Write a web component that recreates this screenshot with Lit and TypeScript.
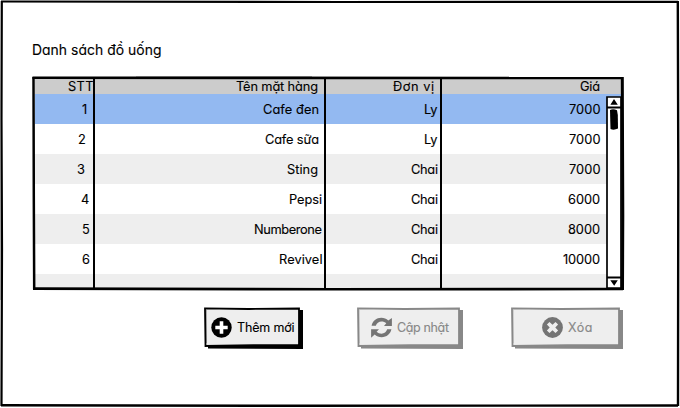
import { LitElement, html, css, svg } from "lit";
import { customElement, property } from "lit/decorators.js";

/** A single line of lettering fitted to a given width. */
@customElement("fit-text")
class FitText extends LitElement {
  @property({ type: Number }) width = 50;
  @property({ type: String }) text = "";
  static styles = css`
    :host { display: block; line-height: 0; flex: none; }
    svg { display: block; overflow: visible; }
    text { font-family: Inter, "Noto Sans", sans-serif; font-feature-settings: "cv11" 1; fill: currentColor; stroke: currentColor; stroke-width: 0.12px; }
  `;
  render() {
    return html`<svg width=${this.width} height="18">
      <text x="0" y="14" textLength=${this.width} lengthAdjust="spacing">${this.text}</text>
    </svg>`;
  }
}

type Cell = [text: string, width: number, inset: number];
const HEADER: Cell[] = [["STT", 25.5, 0], ["Tên mặt hàng", 82, 7.5], ["Đơn vị", 41, 6], ["Giá", 20, 21]];
const ROWS: Cell[][] = [
  [["1", 5.5, 6], ["Cafe đen", 56, 6.5], ["Ly", 13.5, 2.5], ["7000", 31.5, 21]],
  [["2", 7.5, 8], ["Cafe sữa", 54, 6.5], ["Ly", 13.5, 2.5], ["7000", 31.5, 21]],
  [["3", 8, 8], ["Sting", 31, 7.5], ["Chai", 27, 2], ["7000", 31.5, 21]],
  [["4", 8, 4], ["Pepsi", 33, 3], ["Chai", 27, 2], ["6000", 32, 21]],
  [["5", 7.5, 4], ["Numberone", 68, 3], ["Chai", 27, 2], ["8000", 32, 21]],
  [["6", 7.5, 4], ["Revivel", 43.5, 3], ["Chai", 27, 2], ["10000", 37, 21]],
];

const plusIcon = svg`<circle cx="10.5" cy="10.5" r="10.2" fill="currentColor"/>
  <path d="M8.7 4.3h3.6v4.4h4.4v3.6h-4.4v4.4H8.7v-4.4H4.3V8.7h4.4z" fill="#fff"/>`;
const crossIcon = svg`<circle cx="10.5" cy="10.5" r="10.4" fill="currentColor"/>
  <path d="M7.5 4.9l3 2.8 3-2.8 2.6 2.6-2.8 3 2.8 3-2.6 2.6-3-2.8-3 2.8-2.6-2.6 2.8-3-2.8-3z" fill="#eee"/>`;
const refreshIcon = svg`<path fill="currentColor" d="M.6 8.700C1.500 4 5.500.8 10.300.8c2.700 0 5.100 1 7 2.800L20.900.9v8H13l2.300-2.700C14 5 12.300 4.400 10.500 4.400c-2.700 0-4.900 1.600-5.700 4.300zM20.400 12.300c-.9 4.700-4.900 7.900-9.700 7.900-2.700 0-5.100-1-7-2.800L.1 20.700v-8.400H8l-2.400 2.500c1.300 1.200 3.100 1.900 4.900 1.900 2.700 0 4.900-1.700 5.700-4.400z"/>`;

@customElement("sketch-button")
class SketchButton extends LitElement {
  @property({ type: String }) kind = "plus";
  @property({ type: String }) label = "";
  @property({ type: Number }) textwidth = 50;
  @property({ type: Number }) w = 100;
  static styles = css`
    :host { display: block; position: relative; height: 43px; color: #000; }
    :host([disabled]) { color: #888; }
    .frame { position: absolute; inset: 0; overflow: visible; }
    .body { position: relative; display: flex; height: 39px; box-sizing: border-box; padding: 10px 0 0 var(--lead, 7px); gap: 4.5px; }
    .icon { flex: none; display: block; }
    :host([disabled]) .icon { color: #747474; }
    fit-text { font-size: 12.5px; margin-top: 1px; }
  `;
  render() {
    const w = this.w;
    const icon = this.kind === "plus" ? plusIcon : this.kind === "cross" ? crossIcon : refreshIcon;
    return html`
      <svg class="frame" width=${w} height="43">
        <path d="M4 37 L${w - 5} 36 L${w - 5} 3 L${w} 3 L${w} 42 L4 41.500z" fill="currentColor"/>
        <path d="M1 1.300 L${w * 0.45} 2 L${w - 4} 1.500 L${w - 4} 38 L${w * 0.5} 38.200 L1.500 39z" fill="#eee" stroke="currentColor" stroke-width="1.800"/>
        <path d="M2.500 3 L2.500 36" stroke="currentColor" stroke-width=".7" opacity=".4"/>
      </svg>
      <div class="body">
        <svg class="icon" width="21" height="21">${icon}</svg>
        <fit-text text=${this.label} width=${this.textwidth}></fit-text>
      </div>`;
  }
}

@customElement("app-root")
class AppRoot extends LitElement {
  static styles = css`
    :host { display: block; position: relative; width: 680px; height: 408px; background: #fff; color: #000; overflow: hidden; }
    .outline { position: absolute; inset: 0; pointer-events: none; }
    .page { display: flex; flex-direction: column; box-sizing: border-box; height: 408px; padding: 41px 56px 0 32px; }
    .title { font-size: 13.9px; }
    .table { position: relative; margin-top: 17px; height: 215px; width: 592px; }
    .grid { box-sizing: border-box; padding: 2px 3px 2px 3px; height: 214px; overflow: hidden; display: flex; flex-direction: column; }
    .row { flex: none; display: grid; grid-template-columns: 58px 232px 115px 181px; height: 30px; background: #fff; font-size: 12.8px; }
    .row.striped { background: #eee; }
    .row.selected { background: #93b9f1; }
    .row.head { height: 16px; background: #ccc; }
    .row.last { height: 15px; background: #eee; }
    .cell { display: flex; justify-content: flex-end; padding-top: 6px; box-sizing: border-box; }
    .head .cell { padding-top: 0; margin-top: -1px; }
    .rules { position: absolute; inset: 0; overflow: visible; }
    .scroll { position: absolute; left: 574px; top: 20px; overflow: visible; }
    .actions { display: flex; margin: 16px 0 0 172px; }
    .refresh { margin-left: 54px; --lead: 14px; }
    .cross { margin-left: 48px; --lead: 31px; }
  `;
  private cells(cells: Cell[]) {
    return cells.map(([text, width, inset]) => html`<div class="cell" style="padding-right:${inset}px">
      <fit-text text=${text} width=${width}></fit-text></div>`);
  }
  render() {
    return html`
      <div class="page">
        <fit-text class="title" text="Danh sách đồ uống" width="129.5"></fit-text>
        <div class="table">
          <div class="grid">
            <div class="row head">${this.cells(HEADER)}</div>
            ${ROWS.map((r, i) => html`<div class="row ${i === 0 ? "selected" : i % 2 ? "" : "striped"}">${this.cells(r)}</div>`)}
            <div class="row last"></div>
          </div>
          <svg class="rules" width="592" height="215" fill="none" stroke="#000">
            <path d="M.5 1.800 L590.500 2" stroke-width="2.600"/>
            <path d="M1.500 1 L1.800 120 L2.200 213" stroke-width="2.500"/>
            <path d="M1 212.600 L300 213.300 L591 213" stroke-width="2.600"/>
            <path d="M590.300 1 L590.800 140 L590.500 214" stroke-width="3"/>
            <path d="M62 2 V214 M293 2 V213 M409 2 V214" stroke-width="2"/>
            <path d="M104 .5 H280" stroke-width="1" stroke="#666"/>
          </svg>
          <svg class="scroll" width="16" height="193">
            <path d="M1 1 H15 V192 H1z" fill="#fff" stroke="#000" stroke-width="1.700"/>
            <path d="M1 11.500 H15 M1 181.500 H15" stroke="#000" stroke-width="1.800"/>
            <path d="M8 3 L11.800 8.700 H4.400z M4.300 184.300 H11.800 L8.200 189.700z" fill="#000"/>
            <path d="M4 14 Q7 12.500 11 14.200 L11.800 19 L12 32.500 Q8 34.500 4.500 33 L4.200 22z" fill="#000"/>
          </svg>
        </div>
        <div class="actions">
          <sketch-button kind="plus" label="Thêm mới" .w=${99} textwidth="57.5" style="width:99px"></sketch-button>
          <sketch-button class="refresh" disabled kind="refresh" label="Cập nhật" .w=${106} textwidth="52" style="width:106px"></sketch-button>
          <sketch-button class="cross" disabled kind="cross" label="Xóa" .w=${112} textwidth="24.5" style="width:112px"></sketch-button>
        </div>
      </div>
      <svg class="outline" width="680" height="408" fill="none" stroke="#000">
        <path d="M1 1.500 L340 2 L678 1.800" stroke-width="2.200"/>
        <path d="M1.800 1 L1.500 120 L2 250 L1.500 406" stroke-width="2.200"/>
        <path d="M1 405.300 L300 405.800 L678 405.500" stroke-width="2.400"/>
        <path d="M677.800 1 L678.300 170 L678 406" stroke-width="2.400"/>
        <path d="M0 100 V300" stroke="#666"/>
      </svg>`;
  }
}
